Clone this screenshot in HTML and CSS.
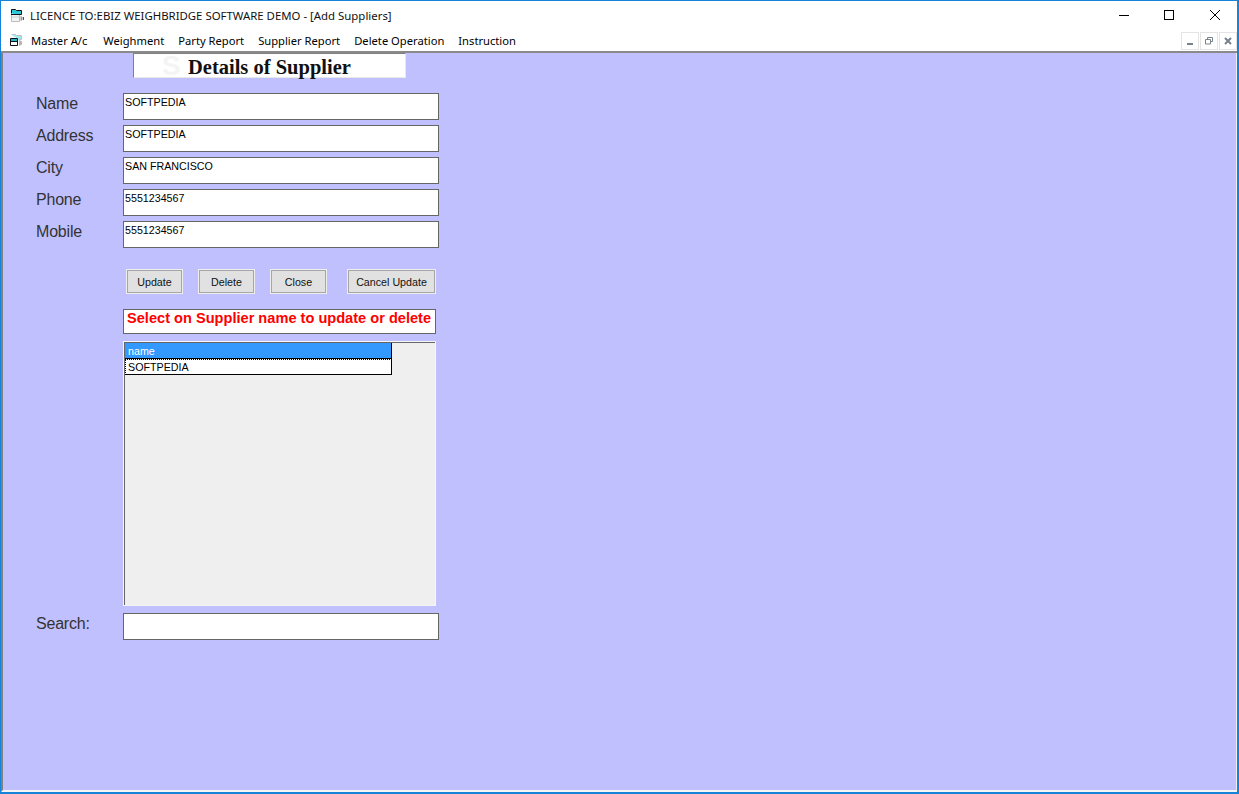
FILE: index.html
```html
<!DOCTYPE html>
<html lang="en">
<head>
<meta charset="utf-8">
<title>Add Suppliers</title>
<link rel="stylesheet" href="styles.css">
</head>
<body>
<div class="window">
  <header class="titlebar">
    <svg class="app-icon" width="16" height="16" viewBox="0 0 16 16"><path d="M1.500 6.500h8v7h-8z" fill="#f2f2f2" stroke="#bdbdbd"/><path d="M2 8h7v2H2z" fill="#d8e4e8"/><path d="M1.500 5.500v-4h4l1 1h5v4h-2" fill="#28c8d8" stroke="#111"/><path d="M1 6h9v1H1z" fill="#111"/><path d="M10.500 8l2 1v3l-2 1z" fill="#999"/><path d="M13 9h1v3h-1z" fill="#555"/></svg>
    <span class="title">LICENCE TO:EBIZ WEIGHBRIDGE SOFTWARE DEMO - [Add Suppliers]</span>
    <div class="win-controls">
      <svg width="46" height="29" viewBox="0 0 46 29"><path d="M19 14.500h10" stroke="#000"/></svg>
      <svg width="46" height="29" viewBox="0 0 46 29"><rect x="18.500" y="9.500" width="9" height="9" fill="none" stroke="#000"/></svg>
      <svg width="46" height="29" viewBox="0 0 46 29"><path d="M18 9l10 10M28 9L18 19" stroke="#000" fill="none"/></svg>
    </div>
  </header>
  <nav class="menubar">
    <svg class="menu-icon" width="16" height="16" viewBox="0 0 16 16"><path d="M2.500 1.500h4l1 1h5v4h-3" fill="#9fe8ee" stroke="#b8c4c8"/><path d="M1.500 5.500h7v7h-7z" fill="#fff" stroke="#111"/><path d="M2 6h6v2H2z" fill="#20b8c8"/><path d="M1 8h8v1H1z" fill="#111"/><path d="M10 7l3 1.500v3L10 13z" fill="#b5b5b5"/></svg>
    <span class="menu-item menu-first">Master A/c</span>
    <span class="menu-item">Weighment</span>
    <span class="menu-item">Party Report</span>
    <span class="menu-item">Supplier Report</span>
    <span class="menu-item">Delete Operation</span>
    <span class="menu-item">Instruction</span>
    <div class="mdi-controls">
      <span class="mdi-btn"><svg width="10" height="10" viewBox="0 0 10 10"><path d="M2 7h6v2H2z" fill="#78828c"/></svg></span>
      <span class="mdi-btn"><svg width="10" height="10" viewBox="0 0 10 10"><path d="M3.500 3V1.500h5v4H7M1.500 3.500h5v4.500h-5z" fill="none" stroke="#78828c"/></svg></span>
      <span class="mdi-btn"><svg width="10" height="10" viewBox="0 0 10 10"><path d="M2 2l6 6M8 2L2 8" stroke="#78828c" stroke-width="2"/></svg></span>
    </div>
  </nav>
  <main class="client">
    <div class="heading-row">
      <h1 class="heading"><span class="watermark">S</span><span class="heading-text">Details of Supplier</span></h1>
    </div>
    <div class="field-row"><span class="label">Name</span><div class="input">SOFTPEDIA</div></div>
    <div class="field-row"><span class="label">Address</span><div class="input">SOFTPEDIA</div></div>
    <div class="field-row"><span class="label">City</span><div class="input">SAN FRANCISCO</div></div>
    <div class="field-row"><span class="label">Phone</span><div class="input">5551234567</div></div>
    <div class="field-row"><span class="label">Mobile</span><div class="input">5551234567</div></div>
    <div class="buttons">
      <button class="btn btn-update">Update</button>
      <button class="btn btn-delete">Delete</button>
      <button class="btn btn-close">Close</button>
      <button class="btn btn-cancel">Cancel Update</button>
    </div>
    <div class="notice">Select on Supplier name to update or delete</div>
    <div class="grid">
      <div class="grid-head">name</div>
      <div class="grid-cell">SOFTPEDIA</div>
    </div>
    <div class="field-row search-row"><span class="label">Search:</span><div class="input"></div></div>
  </main>
</div>
</body>
</html>
```
FILE: styles.css
```css
html, body {
  margin: 0;
  height: 100%;
  overflow: hidden;
}
.window {
  box-sizing: border-box;
  width: 1239px;
  height: 794px;
  display: flex;
  flex-direction: column;
  border: solid #1683d8;
  border-width: 1px 2px 2px 1px;
  background: #fff;
  font-family: "Noto Sans", "Liberation Sans", sans-serif;
  color: #000;
}
.titlebar {
  height: 29px;
  flex: none;
  display: flex;
  align-items: center;
  padding-left: 9px;
  font-size: 11.400px;
}
.app-icon {
  margin-right: 4px;
}
.title {
  color: #111;
  white-space: nowrap;
}
.win-controls {
  margin-left: auto;
  margin-right: -1px;
  display: flex;
}
.menubar {
  height: 21px;
  flex: none;
  display: flex;
  align-items: center;
  padding-left: 8px;
  font-size: 11.200px;
  border-bottom: 2px solid #8a8a8a;
}
.menu-icon {
  margin-right: 6px;
}
.menu-item {
  margin-right: 14px;
  white-space: nowrap;
}
.menu-first {
  margin-right: 16px;
}
.mdi-controls {
  margin-left: auto;
  display: flex;
  gap: 1px;
}
.mdi-btn {
  width: 16px;
  height: 16px;
  border: 1px solid #e4e4e4;
  display: flex;
  align-items: center;
  justify-content: center;
}
.client {
  flex: 1;
  background: #c0c0ff;
  border-left: 2px solid #808080;
  border-right: 1px solid #eee;
  border-bottom: 2px solid #f4f4f4;
  padding-left: 120px;
  position: relative;
  display: flex;
  flex-direction: column;
  align-items: flex-start;
  font-family: "Liberation Sans", Arial, sans-serif;
}
.heading-row {
  padding-left: 10px;
  height: 40px;
}
.heading {
  box-sizing: border-box;
  margin: 0;
  width: 273px;
  height: 25px;
  background: #fff;
  border: 1px solid;
  border-color: #808080 #e8e8e8 #e8e8e8 #808080;
  font: bold 20.500px/26px "Liberation Serif", "Times New Roman", serif;
  color: #111;
  position: relative;
  padding-left: 54px;
}
.watermark {
  position: absolute;
  left: 28px;
  top: 0;
  font: bold 28px/23px "Liberation Sans", sans-serif;
  color: #f4f4f4;
}
.heading-text {
  position: relative;
}
.field-row {
  display: flex;
  align-items: flex-start;
  margin-bottom: 5px;
}
.label {
  position: absolute;
  left: 33px;
  font-size: 16px;
  letter-spacing: -0.2px;
  line-height: 20px;
  margin-top: 1px;
  color: #333;
}
.input {
  box-sizing: border-box;
  width: 316px;
  height: 27px;
  background: #fff;
  border: 1px solid #666;
  font: 10.700px/17px "Liberation Sans", sans-serif;
  padding-left: 1px;
}
.buttons {
  display: flex;
  margin-top: 17px;
  padding-left: 4px;
}
.btn {
  box-sizing: border-box;
  height: 23px;
  background: #e1e1e1;
  border: 1px solid #a6a6a6;
  outline: 1px solid #eee;
  padding: 0;
  font: 10.700px "Liberation Sans", sans-serif;
  color: #111;
}
.btn-update { width: 55px; margin-right: 17px; }
.btn-delete { width: 55px; margin-right: 17px; }
.btn-close { width: 55px; margin-right: 22px; }
.btn-cancel { width: 87px; }
.notice {
  box-sizing: border-box;
  margin-top: 16px;
  width: 313px;
  height: 25px;
  background: #fff;
  border: 1px solid #666;
  color: #f00;
  font: bold 14.600px/17px "Liberation Sans", sans-serif;
  padding-left: 3px;
  white-space: nowrap;
}
.grid {
  box-sizing: border-box;
  margin-top: 7px;
  width: 313px;
  height: 265px;
  background: #efefef;
  border: 1px solid #f6f6f6;
  box-shadow: inset 1px 1px 0 #666;
  padding: 1px 0 0 1px;
  margin-bottom: 7px;
}
.grid-head, .grid-cell {
  box-sizing: border-box;
  width: 267px;
  height: 16px;
  font: 10.700px/17px "Liberation Sans", sans-serif;
  padding-left: 3px;
  border-right: 1px solid #000;
  border-bottom: 1px solid #000;
}
.grid-head {
  background: #3399ff;
  color: #fff;
}
.grid-cell {
  background: #fff;
  outline: 1px dotted #000;
  outline-offset: -1px;
}
```
